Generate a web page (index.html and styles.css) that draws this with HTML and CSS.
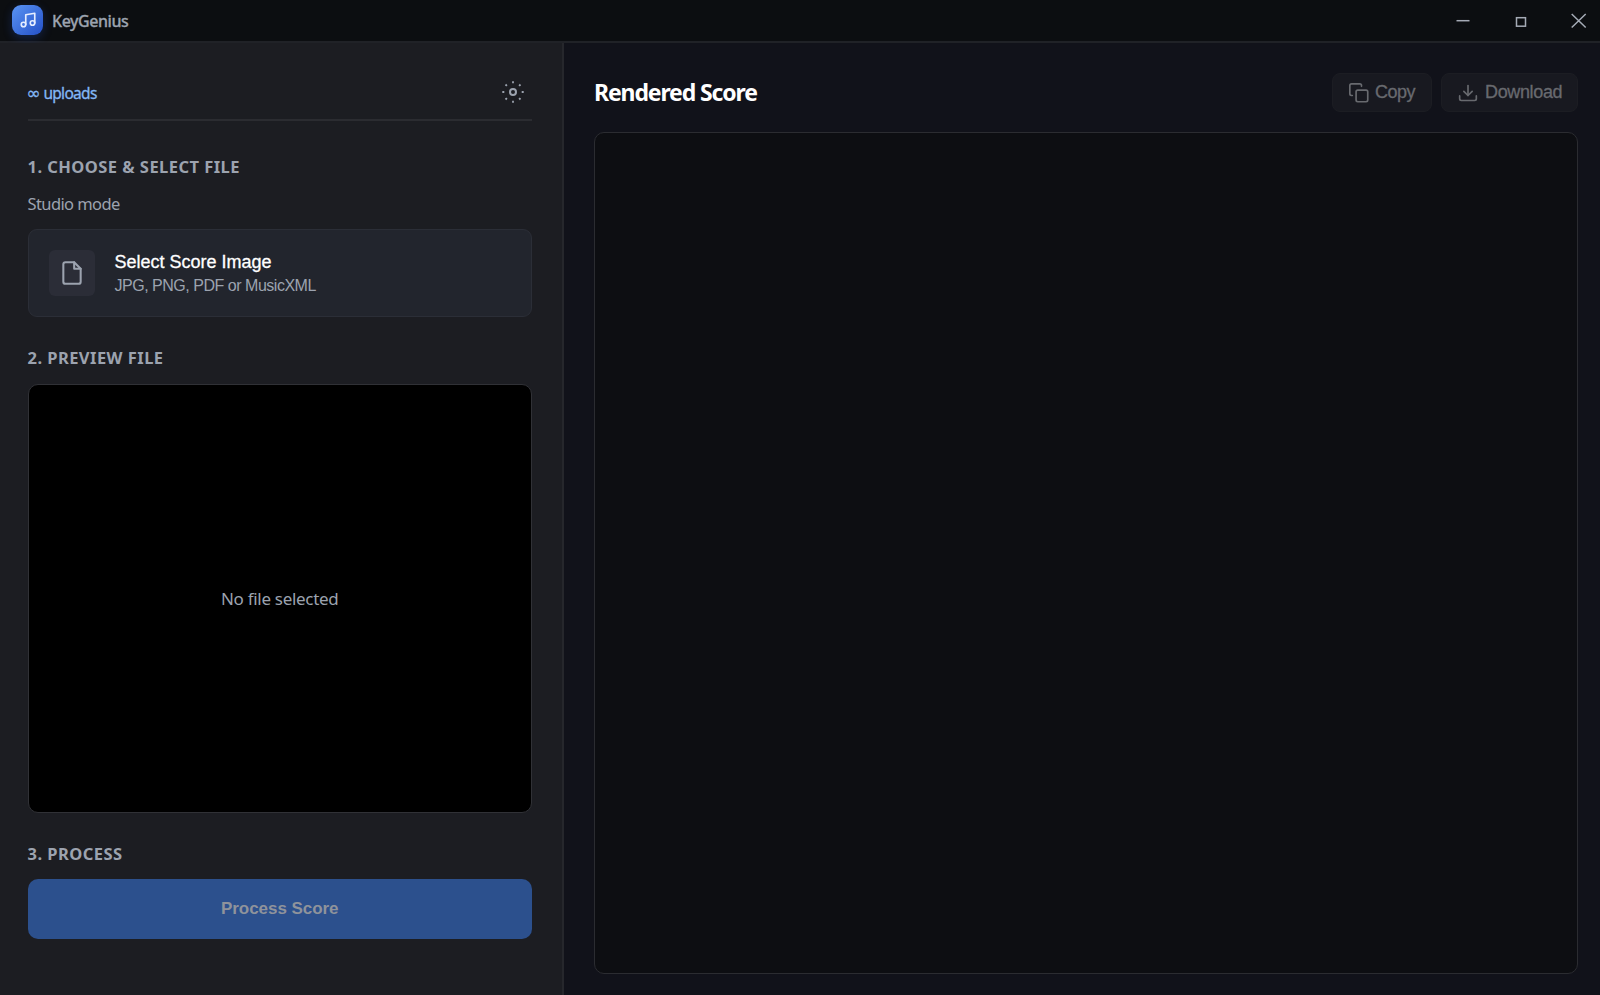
FILE: index.html
```html
<!DOCTYPE html>
<html lang="en">
<head>
<meta charset="utf-8">
<title>KeyGenius</title>
<link rel="stylesheet" href="styles.css">
</head>
<body>
<div class="app">
  <header class="titlebar">
    <div class="logo">
      <svg width="18" height="18" viewBox="0 0 24 24" fill="none" stroke="currentColor" stroke-width="2.200" stroke-linecap="round" stroke-linejoin="round"><path d="M9 18V5l12-2v13"/><circle cx="6" cy="18" r="3"/><circle cx="18" cy="16" r="3"/></svg>
    </div>
    <span class="app-name">KeyGenius</span>
    <div class="window-controls">
      <svg width="58" height="41" viewBox="0 0 58 41"><path d="M22.500 20.700h13" /></svg>
      <svg width="58" height="41" viewBox="0 0 58 41"><rect x="24.500" y="17.700" width="9" height="8.500" /></svg>
      <svg width="50" height="41" viewBox="0 0 50 41"><path d="M21.700 14l14 13.500M35.700 14l-14 13.500" /></svg>
    </div>
  </header>
  <div class="body">
    <aside class="sidebar">
      <div class="account">
        <span class="uploads"><span class="infinity">∞</span> uploads</span>
        <svg class="gear" width="24" height="24" viewBox="0 0 24 24" fill="none" stroke="currentColor" stroke-width="2"><circle cx="12" cy="12" r="3"/><g stroke-width="1.800"><path d="M12 1.300v2M12 20.700v2M1.300 12h2M20.700 12h2M4.500 4.500l1.400 1.400M18.100 18.100l1.400 1.400M4.500 19.500l1.400-1.400M18.100 5.900l1.400-1.400"/></g></svg>
      </div>
      <h2 class="step step-choose">1. CHOOSE &amp; SELECT FILE</h2>
      <p class="mode">Studio mode</p>
      <div class="picker">
        <div class="picker-icon">
          <svg width="26" height="26" viewBox="0 0 24 24" fill="none" stroke="currentColor" stroke-width="1.900" stroke-linecap="round" stroke-linejoin="round"><path d="M14 2H6a2 2 0 0 0-2 2v16a2 2 0 0 0 2 2h12a2 2 0 0 0 2-2V8z"/><path d="M14 2v6h6"/></svg>
        </div>
        <div class="picker-text">
          <div class="picker-title">Select Score Image</div>
          <div class="picker-hint">JPG, PNG, PDF or MusicXML</div>
        </div>
      </div>
      <h2 class="step step-preview">2. PREVIEW FILE</h2>
      <div class="preview"><span class="preview-empty">No file selected</span></div>
      <h2 class="step step-process">3. PROCESS</h2>
      <button class="process" disabled>Process Score</button>
    </aside>
    <main class="main">
      <div class="main-head">
        <h1 class="title">Rendered Score</h1>
        <div class="actions">
          <button class="action copy" disabled><svg width="20" height="20" viewBox="0 0 24 24" fill="none" stroke="currentColor" stroke-width="2" stroke-linecap="round" stroke-linejoin="round"><rect x="8.500" y="8.500" width="14" height="14" rx="2"/><path d="M4 15H3a2 2 0 0 1-2-2V3a2 2 0 0 1 2-2h10a2 2 0 0 1 2 2v1"/></svg><span>Copy</span></button>
          <button class="action download" disabled><svg width="20" height="20" viewBox="0 0 24 24" fill="none" stroke="currentColor" stroke-width="2" stroke-linecap="round" stroke-linejoin="round"><path d="M22 15.500V19a2 2 0 0 1-2 2H4a2 2 0 0 1-2-2v-3.500"/><path d="M7 10l5 5 5-5"/><path d="M12 15V3"/></svg><span>Download</span></button>
        </div>
      </div>
      <div class="score"></div>
    </main>
  </div>
</div>
</body>
</html>
```
FILE: styles.css
```css
* { box-sizing: border-box; }
body {
  margin: 0;
  background: #11121a;
  color: #9ca3af;
  font-family: "Noto Sans", "Open Sans", sans-serif;
}
h1, h2, p { margin: 0; }
button { border: 0; font-family: "Liberation Sans", sans-serif; }
svg { display: block; flex: none; }
span, h1, h2, p, .picker-title, .picker-hint { white-space: nowrap; }

.app { height: 995px; display: flex; flex-direction: column; overflow: hidden; }

.titlebar {
  height: 43px;
  flex: none;
  display: flex;
  align-items: center;
  padding: 0 0 1px 12px;
  background: #0c0e11;
  border-bottom: 2px solid #202227;
}
.logo {
  width: 31px;
  height: 30px;
  margin-top: -1px;
  display: flex;
  align-items: center;
  justify-content: center;
  border-radius: 9px;
  color: #e6edff;
  background: linear-gradient(135deg, #5a94f3, #2450c8);
  box-shadow: 0 3px 10px rgba(37, 84, 200, .3);
}
.app-name { margin-left: 9px; padding-top: 1px; font-size: 16px; line-height: 22px; font-weight: 500; letter-spacing: -.45px; -webkit-text-stroke: .3px; }
.window-controls { margin-left: auto; display: flex; color: #a5abb6; }
.window-controls svg { fill: none; stroke: currentColor; stroke-width: 1.500; }

.body { flex: 1; display: flex; min-height: 0; }
.sidebar {
  width: 564px;
  flex: none;
  padding: 26px 30px 0 27.500px;
  display: flex;
  flex-direction: column;
  background: #1c1d22;
  border-right: 2px solid #26272c;
}
.account {
  height: 52px;
  display: flex;
  align-items: center;
  justify-content: space-between;
  padding: 0 7px 5px 0;
  border-bottom: 2px solid #2b2c31;
}
.uploads { padding-top: 2px; color: #83b7f6; font-size: 15.500px; line-height: 22px; letter-spacing: -.7px; -webkit-text-stroke: .3px; }
.infinity { font-family: "DejaVu Sans", sans-serif; font-size: 17px; line-height: 1; letter-spacing: -.6px; margin-left: -1px; }
.gear { color: #9ca3af; }
.step { font-size: 16.500px; line-height: 24px; font-weight: 700; letter-spacing: .45px; }
.step-choose { margin-top: 34px; }
.mode { margin-top: 13px; font-size: 16.500px; line-height: 24px; letter-spacing: -.6px; }
.picker {
  height: 88px;
  margin-top: 13px;
  display: flex;
  align-items: center;
  padding-left: 20px;
  border: 1px solid #2b2e37;
  border-radius: 9px;
  background: #22252d;
}
.picker-icon {
  width: 46px;
  height: 46px;
  display: flex;
  align-items: center;
  justify-content: center;
  border-radius: 6px;
  background: #2b2d37;
}
.picker-text { margin-left: 20px; padding-top: 2px; font-family: "Liberation Sans", sans-serif; }
.picker-title { color: #fff; font-size: 18px; line-height: 23px; -webkit-text-stroke: .3px; }
.picker-hint { font-size: 16px; line-height: 23px; letter-spacing: -.48px; }
.step-preview { margin-top: 29px; }
.preview {
  height: 429px;
  margin-top: 14px;
  display: flex;
  align-items: center;
  justify-content: center;
  border: 1px solid #303136;
  border-radius: 10px;
  background: #000;
}
.preview-empty { font-size: 17px; letter-spacing: -.3px; }
.step-process { margin-top: 29px; }
.process {
  height: 60px;
  margin-top: 13px;
  padding: 0;
  border-radius: 10px;
  background: #2c508d;
  color: #8f939b;
  font-size: 17px;
  font-weight: 700;
  letter-spacing: -.05px;
}

.main { flex: 1; padding: 30px 22px 21px 30px; display: flex; flex-direction: column; }
.main-head { height: 39px; display: flex; align-items: center; justify-content: space-between; }
.title { color: #fff; font-size: 23px; line-height: 31px; font-weight: 700; letter-spacing: -1.130px; }
.actions { display: flex; gap: 9px; }
.action {
  height: 39px;
  padding: 0 0 0 16px;
  display: flex;
  align-items: center;
  gap: 6px;
  border: 1px solid #1c1d23;
  border-radius: 8px;
  background: #181920;
  color: #686a6f;
  font-size: 18px;
  letter-spacing: -.5px;
  -webkit-text-stroke: .3px;
}
.copy { width: 100px; }
.download { width: 137px; letter-spacing: -.35px; gap: 7px; }
.score { flex: 1; margin-top: 20px; border: 1px solid #2b2c31; border-radius: 10px; background: #0d0e12; }
```
